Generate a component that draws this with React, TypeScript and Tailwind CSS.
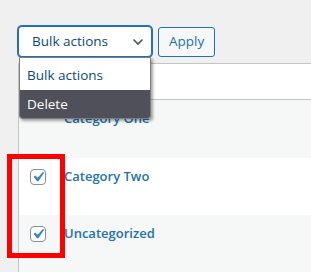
const checkPath = 'M14.83 4.89l1.34.94-5.81 8.38H9.02L5.78 9.67l1.34-1.25 2.57 2.4z';

function CheckBox() {
  return (
    <span className="flex h-4 w-4 items-center justify-center rounded-[4px] border border-[#8c8f94] bg-white">
      <svg viewBox="0 0 20 20" className="h-[20px] w-[20px] shrink-0">
        <path d={checkPath} fill="#3582c4" />
      </svg>
    </span>
  );
}

const rows = [
  { name: 'Category One', checked: false, h: 'h-[58px]', bg: 'bg-[#f6f7f7]' },
  { name: 'Category Two', checked: true, h: 'h-[57px]', bg: 'bg-white' },
  { name: 'Uncategorized', checked: true, h: 'h-[57px]', bg: 'bg-[#f6f7f7]' },
];

export default function App() {
  return (
    <div className="relative h-[272px] w-[311px] overflow-hidden bg-[#f0f0f1] font-['Open_Sans',sans-serif]">
      {/* Bulk action bar */}
      <div className="flex items-center gap-[5px] pl-[18px] pt-[26px]">
        <div className="relative flex h-[31px] w-[134px] items-center rounded-[4px] border border-[#2271b1] bg-white pl-[13px] shadow-[0_0_0_1px_#2271b1]">
          <span className="text-[13.5px] text-[#0a4b78]">Bulk actions</span>
          <svg viewBox="0 0 10 6" className="absolute right-[8px] top-[12px] h-[6px] w-[10px] overflow-visible">
            <path d="M0.5 0.5l4.5 4.5 4.5-4.5" fill="none" stroke="#50575e" strokeWidth="1.7" />
          </svg>
        </div>
        <button
          type="button"
          className="ml-[1px] flex h-[30px] items-center rounded-[3px] border border-[#2271b1] bg-[#f6f7f7] px-[10px] text-[13.5px] text-[#2271b1]"
        >
          Apply
        </button>
      </div>

      {/* Table */}
      <div className="ml-[18px] mt-[6px] border-l border-t border-[#c3c4c7] bg-white">
        <div className="h-[36px] border-b border-[#c3c4c7] bg-white" />
        {rows.map((r) => (
          <div key={r.name} className={`flex items-start ${r.h} ${r.bg}`}>
            <div className="w-[45px] pl-[11px] pt-[11px]">{r.checked ? <CheckBox /> : null}</div>
            <span className="pt-[9px] text-[13px] font-semibold text-[#2271b1]">{r.name}</span>
          </div>
        ))}
      </div>

      {/* Open select menu */}
      <div className="absolute left-[19px] top-[57px] w-[132px] overflow-hidden rounded-b-[3px] border border-[#7d7d7d] bg-white pt-[3px] shadow-[2px_2px_3px_rgba(0,0,0,0.35)]">
        <div className="flex h-[29px] items-center pl-[7px] text-[13.5px] text-[#0a4b78]">Bulk actions</div>
        <div className="flex h-[28px] items-center bg-[#50505a] pl-[7px] text-[13.5px] text-white">Delete</div>
      </div>

      {/* Annotation */}
      <div className="absolute left-[7px] top-[154px] h-[104px] w-[58px] border-[5px] border-[#ff0000]" />
    </div>
  );
}
